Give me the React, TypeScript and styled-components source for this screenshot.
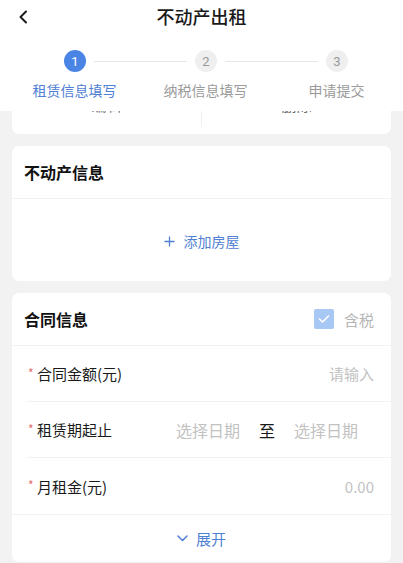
import React from 'react';
import styled, { createGlobalStyle } from 'styled-components';

const GlobalStyle = createGlobalStyle`
  html, body {
    margin: 0;
    padding: 0;
    background: #f2f2f2;
    font-family: "Noto Sans CJK SC", "Noto Sans", sans-serif;
    color: #1a1a1a;
  }
  * { box-sizing: border-box; }
`;

const PRIMARY = '#4a85e6';
const LINK = '#4f80d3';

const steps = ['租赁信息填写', '纳税信息填写', '申请提交'];

const App: React.FC = () => {
  return (
    <Page>
      <GlobalStyle />
      <Header>
        <NavBar>
          <BackButton>
            <svg width="12" height="14" viewBox="0 0 12 14">
              <polyline
                points="8,1.5 2.5,7 8,12.5"
                fill="none"
                stroke="#1a1a1a"
                strokeWidth="2"
                strokeLinecap="round"
                strokeLinejoin="round"
              />
            </svg>
          </BackButton>
          <NavTitle>不动产出租</NavTitle>
        </NavBar>
        <StepTrack>
          {steps.map((s, i) => (
            <React.Fragment key={s}>
              {i > 0 && <StepLine />}
              <StepDot active={i === 0}>{i + 1}</StepDot>
            </React.Fragment>
          ))}
        </StepTrack>
        <StepLabels>
          {steps.map((s, i) => (
            <StepLabel key={s} active={i === 0}>
              {s}
            </StepLabel>
          ))}
        </StepLabels>
      </Header>

      <Content>
        {/* card scrolled mostly under the header */}
        <StubCard>
          <StubCell>
            <StubText>编辑</StubText>
          </StubCell>
          <StubCell bordered>
            <StubText>删除</StubText>
          </StubCell>
        </StubCard>

        <Card>
          <CardHeader>
            <CardTitle>不动产信息</CardTitle>
          </CardHeader>
          <AddArea>
            <AddButton>
              <svg width="11" height="11" viewBox="0 0 11 11">
                <path d="M5.5 0.5v10M0.5 5.5h10" stroke={LINK} strokeWidth="1.3" />
              </svg>
              添加房屋
            </AddButton>
          </AddArea>
        </Card>

        <Card>
          <CardHeader>
            <CardTitle>合同信息</CardTitle>
            <TaxToggle>
              <CheckBox>
                <svg width="12" height="10" viewBox="0 0 12 10">
                  <polyline
                    points="1.5,5 4.5,8 10.5,2"
                    fill="none"
                    stroke="#fff"
                    strokeWidth="1.6"
                    strokeLinecap="round"
                    strokeLinejoin="round"
                  />
                </svg>
              </CheckBox>
              含税
            </TaxToggle>
          </CardHeader>
          <FieldRow>
            <FieldLabel>
              <Required>*</Required>合同金额(元)
            </FieldLabel>
            <Placeholder>请输入</Placeholder>
          </FieldRow>
          <FieldRow>
            <FieldLabel>
              <Required>*</Required>租赁期起止
            </FieldLabel>
            <DateRange>
              <DateText>选择日期</DateText>
              <RangeSep>至</RangeSep>
              <DateText>选择日期</DateText>
            </DateRange>
          </FieldRow>
          <FieldRow last>
            <FieldLabel>
              <Required>*</Required>月租金(元)
            </FieldLabel>
            <Placeholder>0.00</Placeholder>
          </FieldRow>
          <ExpandRow>
            <svg width="11" height="7" viewBox="0 0 11 7">
              <polyline
                points="1,1 5.5,5.5 10,1"
                fill="none"
                stroke={LINK}
                strokeWidth="1.5"
                strokeLinecap="round"
                strokeLinejoin="round"
              />
            </svg>
            展开
          </ExpandRow>
        </Card>
      </Content>
    </Page>
  );
};

const Page = styled.div`
  width: 403px;
  height: 563px;
  overflow: hidden;
  background: #f2f2f2;
`;

const Header = styled.header`
  background: #fff;
  height: 111px;
`;

const NavBar = styled.div`
  position: relative;
  height: 32px;
  display: flex;
  align-items: center;
  justify-content: center;
`;

const BackButton = styled.div`
  position: absolute;
  left: 18px;
  top: 10px;
  display: flex;
`;

const NavTitle = styled.h1`
  margin: 0;
  font-size: 18px;
  font-weight: 500;
  line-height: 1;
  color: #1a1a1a;
`;

const StepTrack = styled.div`
  display: flex;
  align-items: center;
  padding: 18px 55px 0 64px;
`;

const StepDot = styled.div<{ active: boolean }>`
  width: 22px;
  height: 22px;
  border-radius: 50%;
  flex: none;
  display: flex;
  align-items: center;
  justify-content: center;
  font-family: 'Roboto', sans-serif;
  font-size: 13px;
  background: ${(p) => (p.active ? PRIMARY : '#efefef')};
  color: ${(p) => (p.active ? '#fff' : '#9a9a9a')};
`;

const StepLine = styled.div`
  flex: 1;
  height: 1px;
  margin: 0 8px;
  background: #e6e6e6;
`;

const StepLabels = styled.div`
  display: grid;
  grid-template-columns: repeat(3, 131px);
  padding-left: 9px;
  margin-top: 8px;
`;

const StepLabel = styled.div<{ active: boolean }>`
  text-align: center;
  font-size: 14px;
  line-height: 20px;
  color: ${(p) => (p.active ? LINK : '#9b9b9b')};
`;

const Content = styled.main`
  padding: 0 12px;
  display: flex;
  flex-direction: column;
  gap: 12px;
`;

const StubCard = styled.div`
  height: 23px;
  background: #fff;
  border-radius: 0 0 7px 7px;
  display: flex;
`;

const StubCell = styled.div<{ bordered?: boolean }>`
  flex: 1;
  height: 16px;
  overflow: hidden;
  display: flex;
  justify-content: center;
  border-left: ${(p) => (p.bordered ? '1px solid #f0f0f0' : 'none')};
`;

const StubText = styled.span`
  margin-top: -16px;
  font-size: 15px;
  line-height: 20px;
  color: #666;
`;

const Card = styled.section`
  background: #fff;
  border-radius: 7px;
  overflow: hidden;
`;

const CardHeader = styled.div`
  height: 53px;
  display: flex;
  align-items: center;
  justify-content: space-between;
  padding: 0 17px 0 12px;
  border-bottom: 1px solid #f2f2f2;
`;

const CardTitle = styled.h2`
  margin: 0;
  font-size: 16px;
  font-weight: 700;
  color: #111;
`;

const AddArea = styled.div`
  height: 82px;
  display: flex;
  align-items: center;
  justify-content: center;
  padding-top: 2px;
`;

const AddButton = styled.div`
  display: flex;
  align-items: center;
  gap: 9px;
  font-size: 14px;
  color: ${LINK};
`;

const TaxToggle = styled.div`
  display: flex;
  align-items: center;
  gap: 10px;
  font-size: 15px;
  color: #b5b5b5;
`;

const CheckBox = styled.div`
  width: 20px;
  height: 20px;
  border-radius: 2px;
  background: #a7c7f5;
  display: flex;
  align-items: center;
  justify-content: center;
`;

const FieldRow = styled.div<{ last?: boolean }>`
  height: 56px;
  margin-left: 15px;
  padding-right: 17px;
  display: flex;
  align-items: center;
  justify-content: space-between;
  border-bottom: ${(p) => (p.last ? 'none' : '1px solid #f2f2f2')};
`;

const FieldLabel = styled.div`
  display: flex;
  align-items: center;
  font-size: 15px;
  color: #1a1a1a;
`;

const Required = styled.span`
  color: #e36a6a;
  font-size: 12px;
  width: 9px;
  margin-top: -3px;
  margin-left: 1px;
`;

const Placeholder = styled.span`
  font-size: 15px;
  color: #c2c2c2;
`;

const DateText = styled(Placeholder)`
  font-size: 16px;
`;

const DateRange = styled.div`
  display: flex;
  align-items: center;
  gap: 19px;
  margin-right: 16px;
`;

const RangeSep = styled.span`
  font-size: 16px;
  color: #1a1a1a;
`;

const ExpandRow = styled.div`
  height: 48px;
  border-top: 1px solid #f2f2f2;
  display: flex;
  align-items: center;
  justify-content: center;
  gap: 8px;
  font-size: 15px;
  color: ${LINK};
`;

export default App;
